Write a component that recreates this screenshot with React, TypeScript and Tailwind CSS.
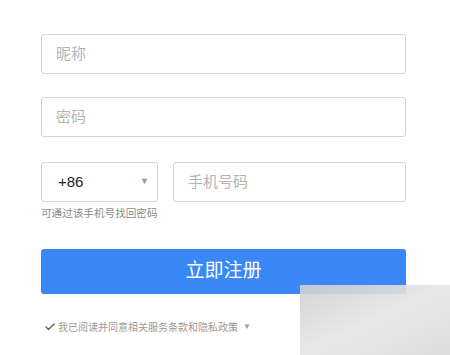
import { Check } from 'lucide-react';

const cjk = { fontFamily: '"Liberation Sans", "Noto Sans CJK SC", sans-serif' };

function Feld({ platzhalter, className = '' }: { platzhalter: string; className?: string }) {
  return (
    <div
      className={`flex h-[40px] items-center rounded-[3px] border border-[#d4d4d4] bg-white px-[14px] text-[15px] text-[#b3b3b3] ${className}`}
    >
      {platzhalter}
    </div>
  );
}

export default function App() {
  return (
    <div className="relative h-[355px] w-[450px] overflow-hidden bg-white" style={cjk}>
      <div className="flex flex-col px-[41px] pt-[34px] pr-[44px]">
        <Feld platzhalter="昵称" />
        <Feld platzhalter="密码" className="mt-[23px] border-[#bdbdbd]" />
        <div className="mt-[25px] flex gap-[15px]">
          <div className="flex h-[40px] w-[117px] items-center justify-between rounded-[3px] border border-[#d4d4d4] pl-[16px] pr-[8px] text-[15px] text-[#222]">
            <span>+86</span>
            <span className="text-[9px] text-[#999]">▼</span>
          </div>
          <Feld platzhalter="手机号码" className="flex-1" />
        </div>
        <div className="mt-[4px] text-[10.6px] text-[#8a8a8a]">可通过该手机号找回密码</div>
        <button className="mt-[27px] flex h-[45px] items-center justify-center rounded-[3px] bg-[#3a88f6] text-[19px] text-white">
          立即注册
        </button>
        <div className="mt-[26px] flex items-center gap-[2px] pl-[3px] text-[10px] text-[#9a9a9a]">
          <Check className="h-[12px] w-[12px] text-[#555]" strokeWidth={2.5} />
          <span>我已阅读并同意相关服务条款和隐私政策</span>
          <span className="ml-[3px] text-[8px]">▼</span>
        </div>
      </div>
      <div className="absolute left-[300px] top-[285px] h-[70px] w-[150px] bg-gradient-to-br from-[#cfcfcf] via-[#e6e6e6] to-[#d9d9d9] opacity-90" />
    </div>
  );
}
